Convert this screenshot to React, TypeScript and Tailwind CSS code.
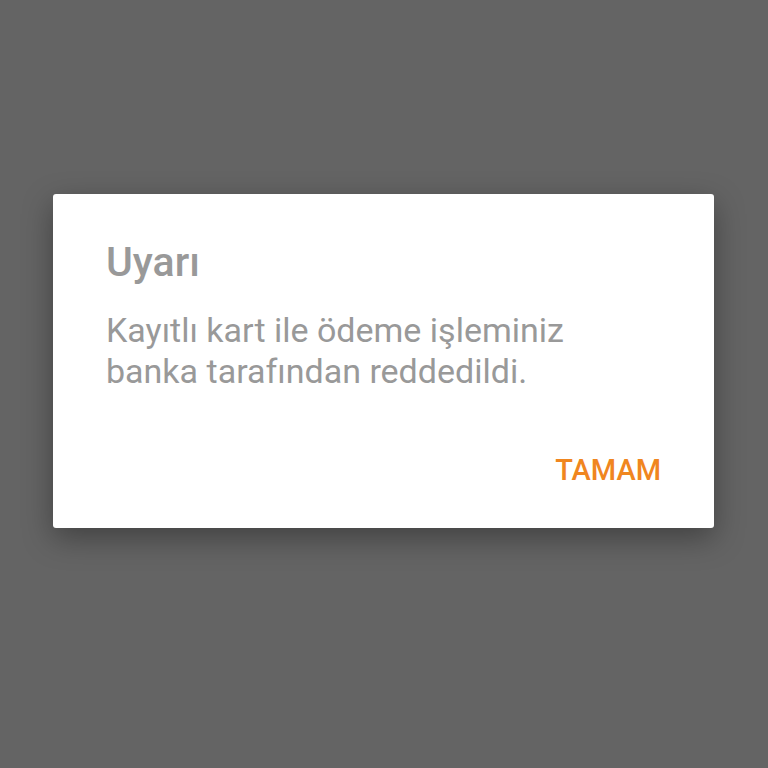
export default function App() {
  return (
    <div className="w-[768px] h-[768px] bg-[#646464] flex items-start pt-[194px] pl-[53px] font-['Roboto',sans-serif]">
      <div className="w-[661px] h-[334px] bg-white rounded-[3px] shadow-[0_10px_30px_rgba(0,0,0,0.35)] flex flex-col px-[53px] pt-[44px]">
        <h2 className="text-[41px] leading-[48px] font-medium text-[#999999]">Uyarı</h2>
        <p className="mt-[24px] text-[34px] leading-[41px] text-[#999999]">
          Kayıtlı kart ile ödeme işleminiz
          <br />
          banka tarafından reddedildi.
        </p>
        <div className="flex justify-end mt-[61px]">
          <button className="text-[29px] leading-[34px] font-medium text-[#f0861f]">TAMAM</button>
        </div>
      </div>
    </div>
  );
}
